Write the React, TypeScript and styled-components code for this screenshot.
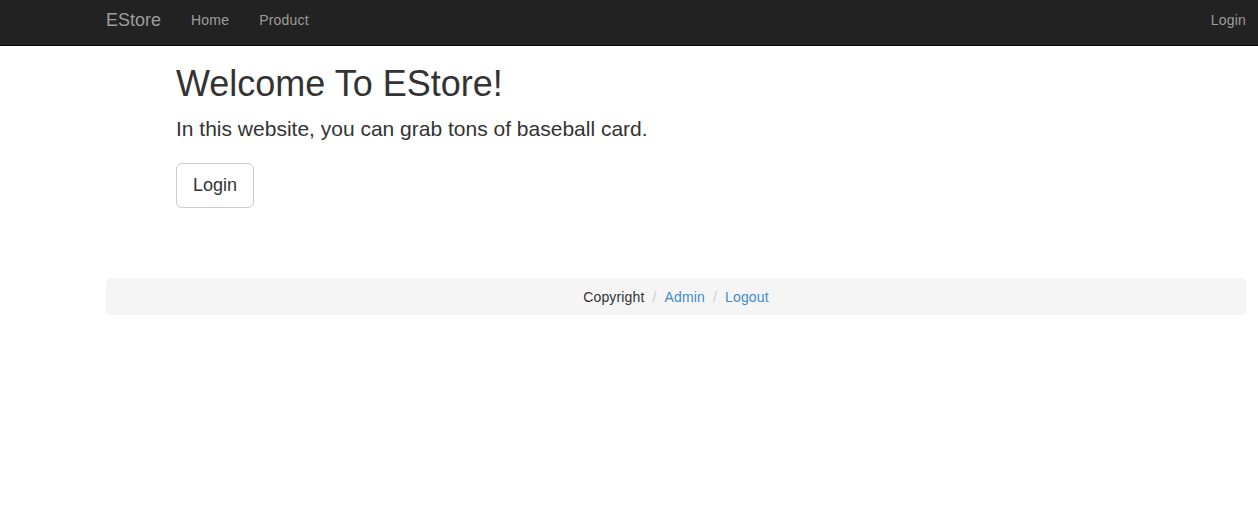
import React from "react";
import styled, { createGlobalStyle } from "styled-components";

const Global = createGlobalStyle`
  html, body { margin: 0; padding: 0; background: #fff; }
  body {
    font-family: "Liberation Sans", Arial, Helvetica, sans-serif;
    font-size: 14px;
    line-height: 1.42857;
    color: #333;
  }
  * { box-sizing: border-box; }
`;

const Navbar = styled.nav`
  height: 46px;
  background: #222;
  border-bottom: 1px solid #080808;
  display: flex;
  align-items: stretch;
  padding: 0 12px 4px 91px;
`;

const Brand = styled.a`
  display: flex;
  align-items: center;
  padding: 0 15px;
  font-size: 18px;
  color: #9d9d9d;
  text-decoration: none;
`;

const NavList = styled.ul<{ $right?: boolean }>`
  display: flex;
  list-style: none;
  margin: 0;
  padding: 0;
  margin-left: ${(p) => (p.$right ? "auto" : "0")};
`;

const NavLink = styled.a<{ $edge?: boolean }>`
  display: flex;
  align-items: center;
  height: 100%;
  padding: ${(p) => (p.$edge ? "0 0 0 15px" : "0 15px")};
  font-size: 14px;
  letter-spacing: 0.2px;
  color: #9d9d9d;
  text-decoration: none;
`;

const Main = styled.main`
  padding: 0 12px 0 106px;
`;

const Hero = styled.section`
  padding: 18px 70px 0;
`;

const Title = styled.h1`
  margin: 0;
  font-size: 36px;
  font-weight: 500;
  line-height: 1.1;
  color: #333;
`;

const Lead = styled.p`
  margin: 10px 0 0;
  font-size: 21px;
  font-weight: 300;
  line-height: 1.4;
`;

const Button = styled.a`
  display: inline-block;
  margin-top: 20px;
  padding: 10px 16px 9px;
  font-size: 18px;
  line-height: 1.3333;
  color: #333;
  background: #fff;
  border: 1px solid #ccc;
  border-radius: 6px;
  text-decoration: none;
`;

const Footer = styled.footer`
  margin-top: 70px;
  background: #f5f5f5;
  border-radius: 4px;
  padding: 9px 15px 8px;
  display: flex;
  justify-content: center;
  font-size: 14px;
  line-height: 20px;
  letter-spacing: 0.15px;
`;

const Crumb = styled.span<{ $link?: boolean }>`
  color: ${(p) => (p.$link ? "#428bca" : "#333")};
`;

const Sep = styled.span`
  color: #ccc;
  padding: 0 8px;
`;

export default function App() {
  return (
    <>
      <Global />
      <Navbar>
        <Brand href="#">EStore</Brand>
        <NavList>
          <li>
            <NavLink href="#">Home</NavLink>
          </li>
          <li>
            <NavLink href="#">Product</NavLink>
          </li>
        </NavList>
        <NavList $right>
          <li>
            <NavLink href="#" $edge>
              Login
            </NavLink>
          </li>
        </NavList>
      </Navbar>
      <Main>
        <Hero>
          <Title>Welcome To EStore!</Title>
          <Lead>In this website, you can grab tons of baseball card.</Lead>
          <Button href="#">Login</Button>
        </Hero>
        <Footer>
          <Crumb>Copyright</Crumb>
          <Sep>/</Sep>
          <Crumb $link>Admin</Crumb>
          <Sep>/</Sep>
          <Crumb $link>Logout</Crumb>
        </Footer>
      </Main>
    </>
  );
}
